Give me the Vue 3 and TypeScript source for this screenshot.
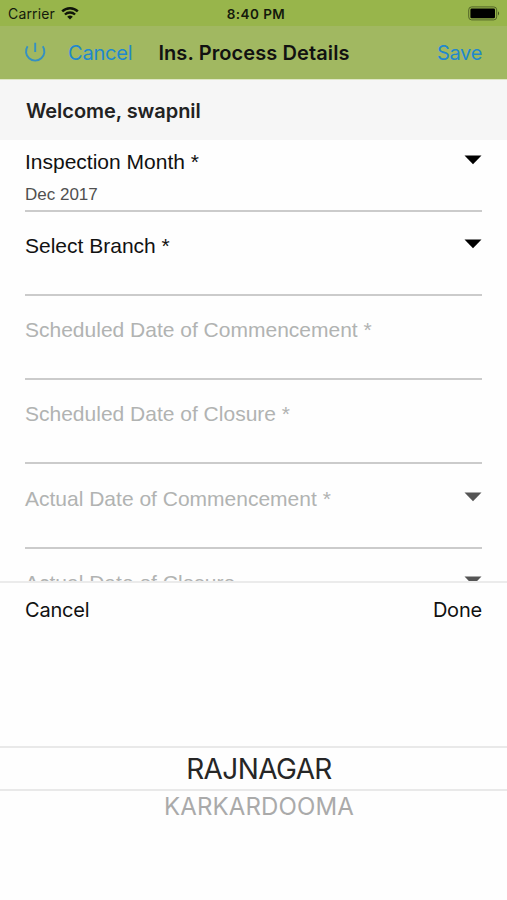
<script setup lang="ts">
import { ref } from 'vue'

interface Field {
  label: string
  value?: string
  active: boolean
  dropdown: boolean
}

const fields = ref<Field[]>([
  { label: 'Inspection Month *', value: 'Dec 2017', active: true, dropdown: true },
  { label: 'Select Branch *', active: true, dropdown: true },
  { label: 'Scheduled Date of Commencement *', active: false, dropdown: false },
  { label: 'Scheduled Date of Closure *', active: false, dropdown: false },
  { label: 'Actual Date of Commencement *', active: false, dropdown: true },
  { label: 'Actual Date of Closure', active: false, dropdown: true },
])
const branches = ['RAJNAGAR', 'KARKARDOOMA']
const selected = ref(0)
</script>

<template>
  <div class="screen">
    <header class="status">
      <div class="carrier">
        <span class="carrier-name">Carrier</span>
        <svg class="wifi" width="18" height="13" viewBox="0 0 18 13" fill="none" stroke="#10150a">
          <path d="M1.2 4.4C5.5.2 12.5.2 16.8 4.4" stroke-width="2.5" />
          <path d="M3.9 7.5c2.9-2.7 7.3-2.7 10.2 0" stroke-width="2.3" />
          <path d="M6.2 9.7Q9 7.3 11.8 9.7L9 12.6Z" fill="#10150a" stroke="none" />
        </svg>
      </div>
      <span class="time">8:40 PM</span>
      <svg class="battery" width="33" height="15" viewBox="0 0 33 15">
        <rect x=".7" y=".9" width="28" height="13" rx="3" fill="none" stroke="#536528" stroke-width="1" />
        <rect x="2.4" y="2.6" width="24.6" height="9.6" rx="1.3" fill="#000" />
        <path d="M30 5.2q2.2 2.2 0 4.4z" fill="#44531f" />
      </svg>
    </header>

    <nav class="nav">
      <svg class="power" width="22" height="22" viewBox="0 0 22 22" fill="none" stroke="#3590c2" stroke-width="1.9">
        <path d="M11.2 1.8v9.2M3.6 5.2a9.2 9.2 0 1 0 15.2 0" />
      </svg>
      <button class="nav-button nav-cancel">Cancel</button>
      <h1 class="title">Ins. Process Details</h1>
      <button class="nav-button save">Save</button>
    </nav>

    <section class="welcome"><span>Welcome, swapnil</span></section>

    <main class="form">
      <div v-for="field in fields" :key="field.label" class="field" :class="{ active: field.active }">
        <div class="label-row">
          <span class="label">{{ field.label }}</span>
          <svg v-if="field.dropdown" class="caret" width="18" height="10" viewBox="0 0 18 10">
            <path d="M.5.5h17L9 9.3z" fill="currentColor" />
          </svg>
        </div>
        <div class="value">{{ field.value }}</div>
      </div>
    </main>

    <section class="sheet">
      <div class="toolbar">
        <button class="sheet-button">Cancel</button>
        <button class="sheet-button">Done</button>
      </div>
      <div class="picker">
        <div
          v-for="(branch, i) in branches"
          :key="branch"
          class="option"
          :class="{ selected: selected === i }"
          @click="selected = i"
        ><span>{{ branch }}</span></div>
      </div>
    </section>
  </div>
</template>

<style>
body {
  background: #fefefe;
}
</style>

<style scoped>
.screen {
  width: 507px;
  height: 900px;
  display: flex;
  flex-direction: column;
  overflow: hidden;
  background: #fefefe;
  color: #111;
  font-family: Inter, "Liberation Sans", sans-serif;
}
button {
  padding: 0;
  border: 0;
  background: none;
  font: inherit;
  color: inherit;
}
.status {
  flex: none;
  height: 26px;
  box-sizing: border-box;
  padding: 1px 6px 0 8px;
  display: grid;
  grid-template-columns: 1fr auto 1fr;
  align-items: center;
  background: #98b54b;
  color: #141a0b;
}
.carrier {
  display: flex;
  align-items: center;
  gap: 6px;
}
.carrier-name {
  font-size: 14px;
  letter-spacing: 0.15px;
}
.wifi {
  margin-top: -1px;
}
.time {
  padding-left: 3px;
  font-size: 13.5px;
  font-weight: 600;
  letter-spacing: 0.45px;
}
.battery {
  justify-self: end;
  margin-top: -1px;
}
.nav {
  flex: none;
  height: 54px;
  box-sizing: border-box;
  border-bottom: 1px solid #dfe7c5;
  padding: 0 25px 0 24px;
  display: flex;
  align-items: center;
  background: #a1b861;
  font-size: 20px;
}
.power {
  margin-top: -2px;
}
.nav-button {
  color: #1f88cf;
  letter-spacing: -0.2px;
}
.nav-cancel {
  margin-left: 22px;
}
.title {
  margin: 0 0 0 26px;
  font-size: 20px;
  font-weight: 600;
  letter-spacing: 0.1px;
  white-space: nowrap;
}
.save {
  margin-left: auto;
  letter-spacing: -0.3px;
}
.welcome {
  flex: none;
  height: 60px;
  padding: 1px 26px 0;
  box-sizing: border-box;
  display: flex;
  align-items: center;
  background: #f6f6f6;
  color: #222;
  font-size: 20px;
  font-weight: 600;
  letter-spacing: -0.05px;
}
.form {
  flex: none;
  height: 441px;
  box-sizing: border-box;
  overflow: hidden;
  padding: 0.6px 25px 0;
  font-family: "Liberation Sans", Arial, sans-serif;
}
.field {
  height: 84.3px;
  color: #b1b3b2;
}
.field.active {
  color: #111;
}
.label-row {
  height: 43px;
  display: flex;
  align-items: center;
  justify-content: space-between;
}
.label {
  margin-top: -1px;
  font-size: 21px;
  white-space: nowrap;
}
.caret {
  margin-top: -5px;
  color: #555;
}
.active .caret {
  color: #000;
}
.value {
  height: 28px;
  box-sizing: border-box;
  border-bottom: 2px solid #cbcbcb;
  font-size: 17px;
  line-height: 22px;
  color: #505050;
}
.sheet {
  flex: 1;
  border-top: 2px solid #ebebeb;
  background: #fefefe;
}
.toolbar {
  height: 53px;
  padding: 0 25px;
  display: flex;
  align-items: center;
  justify-content: space-between;
  font-size: 20px;
}
.sheet-button {
  letter-spacing: -0.2px;
}
.picker {
  padding-top: 110px;
}
.option {
  height: 30px;
  display: flex;
  align-items: center;
  justify-content: center;
  padding-left: 11px;
  font-size: 24px;
  letter-spacing: 0.15px;
  color: #aaa;
}
.option.selected {
  height: 41px;
  border-top: 2px solid #e9e9e9;
  border-bottom: 2px solid #e9e9e9;
  font-size: 28px;
  letter-spacing: -0.6px;
  color: #262626;
}
</style>
